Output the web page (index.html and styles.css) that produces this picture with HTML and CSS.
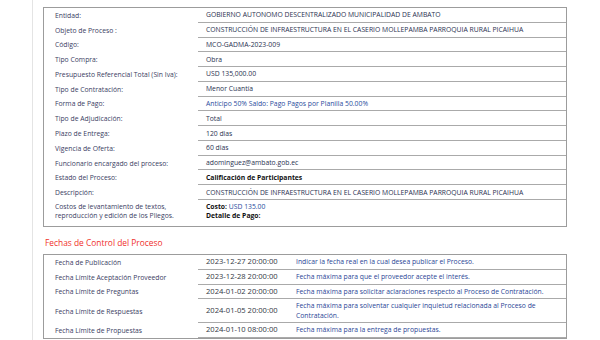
FILE: index.html
```html
<!DOCTYPE html>
<html lang="es">
<head>
<meta charset="utf-8">
<title>Detalle del Proceso</title>
<link rel="stylesheet" href="styles.css">
</head>
<body>
<div class="page">
  <div class="box">
    <div class="detail">
      <div class="lbl">Entidad:</div>
      <div class="val">GOBIERNO AUTONOMO DESCENTRALIZADO MUNICIPALIDAD DE AMBATO</div>
      <div class="lbl">Objeto de Proceso :</div>
      <div class="val">CONSTRUCCIÓN DE INFRAESTRUCTURA EN EL CASERIO MOLLEPAMBA PARROQUIA RURAL PICAIHUA</div>
      <div class="lbl">Código:</div>
      <div class="val">MCO-GADMA-2023-009</div>
      <div class="lbl">Tipo Compra:</div>
      <div class="val">Obra</div>
      <div class="lbl">Presupuesto Referencial Total (Sin Iva):</div>
      <div class="val">USD 135,000.00</div>
      <div class="lbl">Tipo de Contratación:</div>
      <div class="val">Menor Cuantía</div>
      <div class="lbl">Forma de Pago:</div>
      <div class="val blue">Anticipo 50% Saldo: Pago Pagos por Planilla 50.00%</div>
      <div class="lbl">Tipo de Adjudicación:</div>
      <div class="val">Total</div>
      <div class="lbl">Plazo de Entrega:</div>
      <div class="val">120 dias</div>
      <div class="lbl">Vigencia de Oferta:</div>
      <div class="val">60 dias</div>
      <div class="lbl">Funcionario encargado del proceso:</div>
      <div class="val">adominguez@ambato.gob.ec</div>
      <div class="lbl">Estado del Proceso:</div>
      <div class="val strong">Calificación de Participantes</div>
      <div class="lbl">Descripción:</div>
      <div class="val">CONSTRUCCIÓN DE INFRAESTRUCTURA EN EL CASERIO MOLLEPAMBA PARROQUIA RURAL PICAIHUA</div>
      <div class="lbl tall">Costos de levantamiento de textos,<br>reproducción y edición de los Pliegos.</div>
      <div class="val tall last"><span><b>Costo:</b> <span class="blue">USD 135.00</span><br><b>Detalle de Pago:</b></span></div>
    </div>
  </div>

  <h2 class="section-title">Fechas de Control del Proceso</h2>

  <div class="box">
    <div class="dates">
      <div class="lbl">Fecha de Publicación</div>
      <div class="date">2023-12-27 20:00:00</div>
      <div class="desc">Indicar la fecha real en la cual desea publicar el Proceso.</div>
      <div class="lbl">Fecha Límite Aceptación Proveedor</div>
      <div class="date">2023-12-28 20:00:00</div>
      <div class="desc">Fecha máxima para que el proveedor acepte el interés.</div>
      <div class="lbl">Fecha Límite de Preguntas</div>
      <div class="date">2024-01-02 20:00:00</div>
      <div class="desc">Fecha máxima para solicitar aclaraciones respecto al Proceso de Contratación.</div>
      <div class="lbl">Fecha Límite de Respuestas</div>
      <div class="date">2024-01-05 20:00:00</div>
      <div class="desc">Fecha máxima para solventar cualquier inquietud relacionada al Proceso de Contratación.</div>
      <div class="lbl">Fecha Límite de Propuestas</div>
      <div class="date">2024-01-10 08:00:00</div>
      <div class="desc">Fecha máxima para la entrega de propuestas.</div>
    </div>
  </div>
</div>
</body>
</html>
```

FILE: styles.css
```css
* { box-sizing: border-box; }

html, body {
  margin: 0;
  padding: 0;
  background: #ffffff;
}

body {
  font-family: "Open Sans", "Noto Sans", sans-serif;
  font-size: 6.8px;
  color: #2c3357;
}

.page {
  margin-left: 32px;
  border-left: 1px solid #e4e4e4;
  min-height: 340px;
  padding: 7px 0 0 10px;
}

.box {
  width: 524px;
  border: 1px solid #9c9c9c;
}

.detail {
  display: grid;
  grid-template-columns: 154px 1fr;
  grid-template-rows: repeat(13, 14.77px) 26px;
}

.lbl {
  display: flex;
  align-items: center;
  padding-left: 11px;
  line-height: 9px;
  color: #3a3d63;
  white-space: nowrap;
}

.val {
  display: flex;
  align-items: center;
  padding-left: 8px;
  line-height: 9px;
  border-bottom: 1px solid #aaaaaa;
  color: #2a3150;
  white-space: nowrap;
}

.val.last { border-bottom: 0; }

.detail .tall {
  align-items: flex-start;
  padding-top: 2px;
}

.blue { color: #2b4c9c; }

.strong { font-weight: 700; color: #111; }

.val b { color: #111; font-weight: 700; }

.section-title {
  margin: 11px 0 6px 2px;
  font-size: 8.4px;
  line-height: 10px;
  font-weight: 400;
  color: #f0302b;
}

.dates {
  display: grid;
  grid-template-columns: 154px 90px 1fr;
  grid-auto-rows: minmax(14.8px, auto);
}

.dates .date,
.dates .desc {
  display: flex;
  align-items: center;
  padding-left: 8px;
  line-height: 9.5px;
  border-bottom: 1px solid #aaaaaa;
}

.dates .date {
  color: #333845;
  font-size: 7.6px;
}

.dates .desc {
  color: #2a4696;
  padding-top: 2px;
  padding-bottom: 2px;
  padding-right: 4px;
}
```
